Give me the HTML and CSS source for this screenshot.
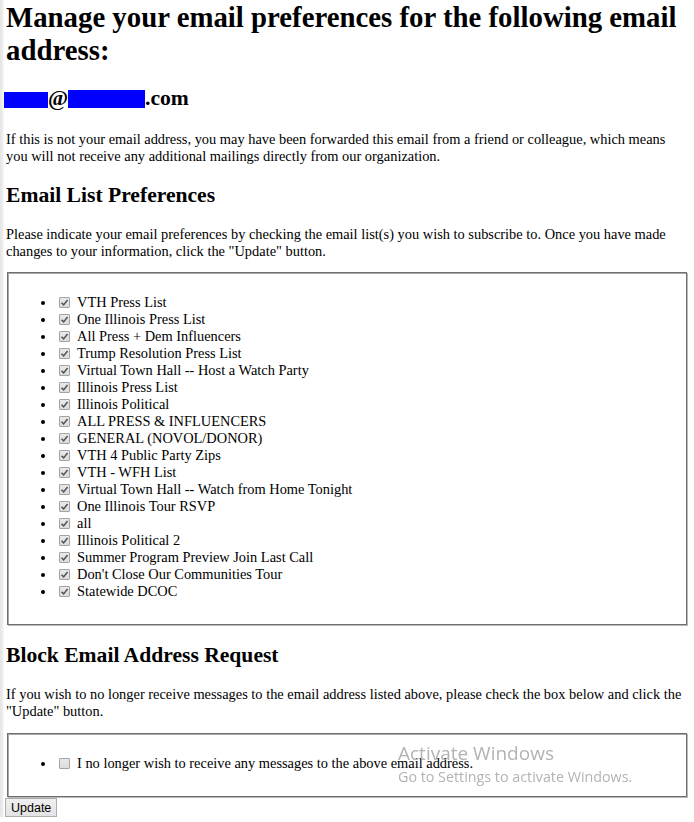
FILE: index.html
```html
<!DOCTYPE html>
<html lang="en">
<head>
<meta charset="utf-8">
<title>Manage your email preferences</title>
<link rel="stylesheet" href="styles.css">
</head>
<body>
<h1>Manage your email preferences for the following email address:</h1>
<h2 class="email"><span class="redact r1"></span>@<span class="redact r2"></span>.com</h2>
<p>If this is not your email address, you may have been forwarded this email from a friend or colleague, which means you will not receive any additional mailings directly from our organization.</p>
<h2>Email List Preferences</h2>
<p>Please indicate your email preferences by checking the email list(s) you wish to subscribe to. Once you have made changes to your information, click the "Update" button.</p>
<fieldset class="box lists">
<ul>
<li><span class="cb on"><svg viewBox="0 0 11 11"><path d="M2.5 5.8 L4.6 7.9 L8.6 3"/></svg></span>VTH Press List</li>
<li><span class="cb on"><svg viewBox="0 0 11 11"><path d="M2.5 5.8 L4.6 7.9 L8.6 3"/></svg></span>One Illinois Press List</li>
<li><span class="cb on"><svg viewBox="0 0 11 11"><path d="M2.5 5.8 L4.6 7.9 L8.6 3"/></svg></span>All Press + Dem Influencers</li>
<li><span class="cb on"><svg viewBox="0 0 11 11"><path d="M2.5 5.8 L4.6 7.9 L8.6 3"/></svg></span>Trump Resolution Press List</li>
<li><span class="cb on"><svg viewBox="0 0 11 11"><path d="M2.5 5.8 L4.6 7.9 L8.6 3"/></svg></span>Virtual Town Hall -- Host a Watch Party</li>
<li><span class="cb on"><svg viewBox="0 0 11 11"><path d="M2.5 5.8 L4.6 7.9 L8.6 3"/></svg></span>Illinois Press List</li>
<li><span class="cb on"><svg viewBox="0 0 11 11"><path d="M2.5 5.8 L4.6 7.9 L8.6 3"/></svg></span>Illinois Political</li>
<li><span class="cb on"><svg viewBox="0 0 11 11"><path d="M2.5 5.8 L4.6 7.9 L8.6 3"/></svg></span>ALL PRESS &amp; INFLUENCERS</li>
<li><span class="cb on"><svg viewBox="0 0 11 11"><path d="M2.5 5.8 L4.6 7.9 L8.6 3"/></svg></span>GENERAL (NOVOL/DONOR)</li>
<li><span class="cb on"><svg viewBox="0 0 11 11"><path d="M2.5 5.8 L4.6 7.9 L8.6 3"/></svg></span>VTH 4 Public Party Zips</li>
<li><span class="cb on"><svg viewBox="0 0 11 11"><path d="M2.5 5.8 L4.6 7.9 L8.6 3"/></svg></span>VTH - WFH List</li>
<li><span class="cb on"><svg viewBox="0 0 11 11"><path d="M2.5 5.8 L4.6 7.9 L8.6 3"/></svg></span>Virtual Town Hall -- Watch from Home Tonight</li>
<li><span class="cb on"><svg viewBox="0 0 11 11"><path d="M2.5 5.8 L4.6 7.9 L8.6 3"/></svg></span>One Illinois Tour RSVP</li>
<li><span class="cb on"><svg viewBox="0 0 11 11"><path d="M2.5 5.8 L4.6 7.9 L8.6 3"/></svg></span>all</li>
<li><span class="cb on"><svg viewBox="0 0 11 11"><path d="M2.5 5.8 L4.6 7.9 L8.6 3"/></svg></span>Illinois Political 2</li>
<li><span class="cb on"><svg viewBox="0 0 11 11"><path d="M2.5 5.8 L4.6 7.9 L8.6 3"/></svg></span>Summer Program Preview Join Last Call</li>
<li><span class="cb on"><svg viewBox="0 0 11 11"><path d="M2.5 5.8 L4.6 7.9 L8.6 3"/></svg></span>Don't Close Our Communities Tour</li>
<li><span class="cb on"><svg viewBox="0 0 11 11"><path d="M2.5 5.8 L4.6 7.9 L8.6 3"/></svg></span>Statewide DCOC</li>
</ul>
</fieldset>
<h2>Block Email Address Request</h2>
<p>If you wish to no longer receive messages to the email address listed above, please check the box below and click the "Update" button.</p>
<fieldset class="box block">
<ul>
<li><span class="cb"></span>I no longer wish to receive any messages to the above email address.</li>
</ul>
</fieldset>
<button class="update" type="button">Update</button>
<div class="watermark">
<div class="wm-title">Activate Windows</div>
<div class="wm-sub">Go to Settings to activate Windows.</div>
</div>
</body>
</html>
```
FILE: styles.css
```css
html {
  background: linear-gradient(to right, #e4e4e4 0, #efefef 3px, #ffffff 4px) no-repeat;
  background-color: #ffffff;
}
body {
  margin: 0;
  padding: 0 6px 0 6px;
  font-family: "Liberation Serif", "Times New Roman", serif;
  font-size: 14.4px;
  line-height: 17px;
  color: #000;
}
h1 {
  font-size: 28.8px;
  line-height: 33px;
  font-weight: bold;
  margin: 1px 0 19px;
}
h2 {
  font-size: 21.6px;
  line-height: 25px;
  font-weight: bold;
  margin: 18px 0;
}
h2.email {
  margin: 19px 0 20px;
}
.redact {
  display: inline-block;
  background: #0000ff;
  vertical-align: -3px;
}
.r1 {
  width: 44px;
  height: 16px;
  margin-left: -2px;
}
.r2 {
  width: 77px;
  height: 18px;
  margin-left: 0;
}
p {
  margin: 15px 0 12px;
}
.box {
  margin: 12px 1px 0;
  padding: 5px 10px 10px;
  border: 1px solid #6f6f6f;
  box-shadow: inset 1px 1px 0 #a8a8a8, 1px 1px 0 #b8b8b8;
  min-inline-size: 0;
}
.box ul {
  margin: 16px 0 14px;
  padding-left: 38px;
  list-style: disc;
}
.box.block {
  margin-top: 13px;
}
.box.block ul {
  margin-bottom: 14px;
}
.cb {
  display: inline-block;
  box-sizing: border-box;
  width: 11px;
  height: 11px;
  margin: 0 7px 0 3px;
  border: 1px solid #a3a3a3;
  border-radius: 1px;
  background: linear-gradient(#e9e9e9, #dcdcdc);
  vertical-align: -1px;
  position: relative;
}
.cb svg {
  position: absolute;
  left: -1px;
  top: -1px;
  width: 11px;
  height: 11px;
  fill: none;
  stroke: #555;
  stroke-width: 1.6;
}
.update {
  display: block;
  margin: 1px 0 0 -1px;
  padding: 0 5px;
  height: 19px;
  font-family: "Liberation Sans", Arial, sans-serif;
  font-size: 12.5px;
  color: #000;
  background: linear-gradient(#f0f0f0, #e3e3e3);
  border: 1px solid #adadad;
  border-radius: 0;
}
.watermark {
  position: fixed;
  left: 398px;
  top: 740px;
  color: #b3b3b3;
  font-family: "Open Sans", "Noto Sans", sans-serif;
  pointer-events: none;
}
.wm-title {
  font-size: 19px;
  line-height: 26px;
}
.wm-sub {
  font-size: 14.3px;
  line-height: 21px;
}
```
